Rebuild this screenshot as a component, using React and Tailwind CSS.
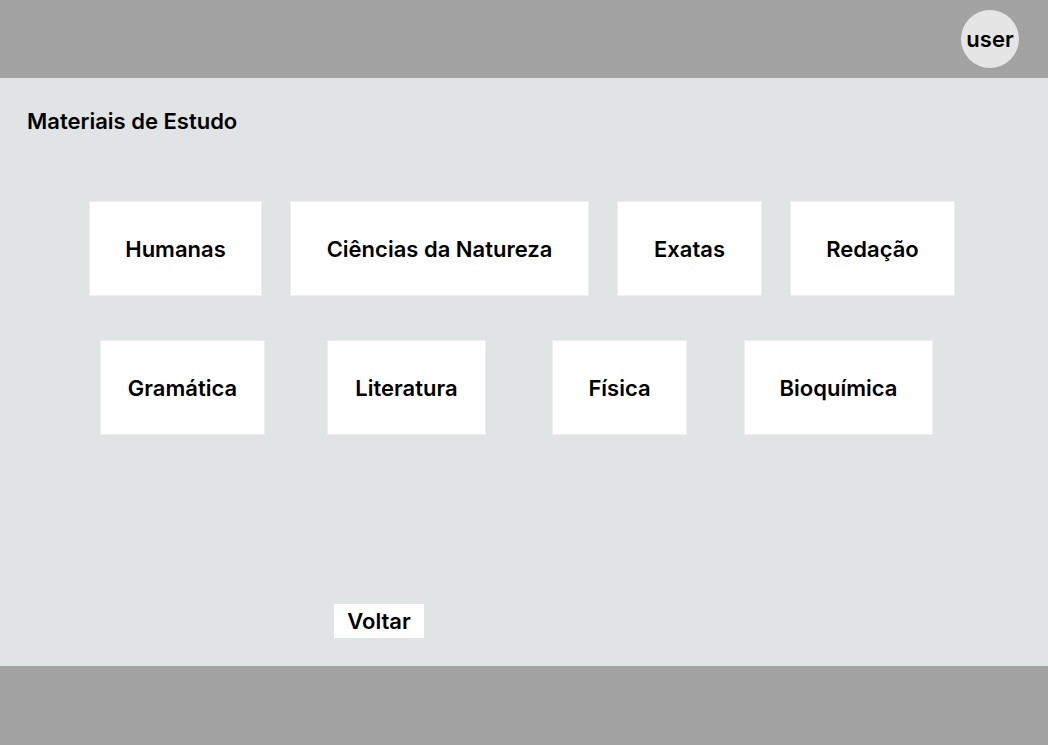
const ROW_ONE = [
  { label: 'Humanas', w: 'w-[173px]', ml: 'ml-0' },
  { label: 'Ciências da Natureza', w: 'w-[299px]', ml: 'ml-[28px]' },
  { label: 'Exatas', w: 'w-[145px]', ml: 'ml-[28px]' },
  { label: 'Redação', w: 'w-[165px]', ml: 'ml-[28px]' },
];

const ROW_TWO = [
  { label: 'Gramática', w: 'w-[165px]', ml: 'ml-0' },
  { label: 'Literatura', w: 'w-[159px]', ml: 'ml-[62px]' },
  { label: 'Física', w: 'w-[135px]', ml: 'ml-[66px]' },
  { label: 'Bioquímica', w: 'w-[189px]', ml: 'ml-[57px]' },
];

function Card({ item }) {
  return (
    <button
      className={`${item.w} ${item.ml} h-[95px] pt-[2px] flex-shrink-0 bg-white border border-[#eeeeee] flex items-center justify-center text-[22px] font-semibold text-black`}
    >
      {item.label}
    </button>
  );
}

export default function App() {
  return (
    <div
      className="h-[745px] w-full flex flex-col bg-[#e1e4e5]"
      style={{ fontFamily: "Inter, 'Noto Sans', sans-serif" }}
    >
      <header className="h-[78px] flex-shrink-0 bg-[#a3a3a3] flex items-center justify-end pr-[29px]">
        <div className="w-[58px] h-[58px] rounded-full bg-[#e5e5e5] flex items-center justify-center text-[22px] font-semibold text-black">
          user
        </div>
      </header>

      <main className="flex-1 flex flex-col">
        <h1 className="mt-[31px] ml-[27px] text-[22px] leading-[24px] font-semibold text-black">
          Materiais de Estudo
        </h1>

        <div className="mt-[68px] ml-[89px] flex">
          {ROW_ONE.map((item) => (
            <Card key={item.label} item={item} />
          ))}
        </div>

        <div className="mt-[44px] ml-[100px] flex">
          {ROW_TWO.map((item) => (
            <Card key={item.label} item={item} />
          ))}
        </div>

        <div className="mt-[169px] ml-[334px]">
          <button className="w-[90px] h-[34px] pt-[1px] bg-white flex items-center justify-center text-[22px] font-semibold text-black">
            Voltar
          </button>
        </div>
      </main>

      <footer className="h-[79px] flex-shrink-0 bg-[#a3a3a3]" />
    </div>
  );
}
